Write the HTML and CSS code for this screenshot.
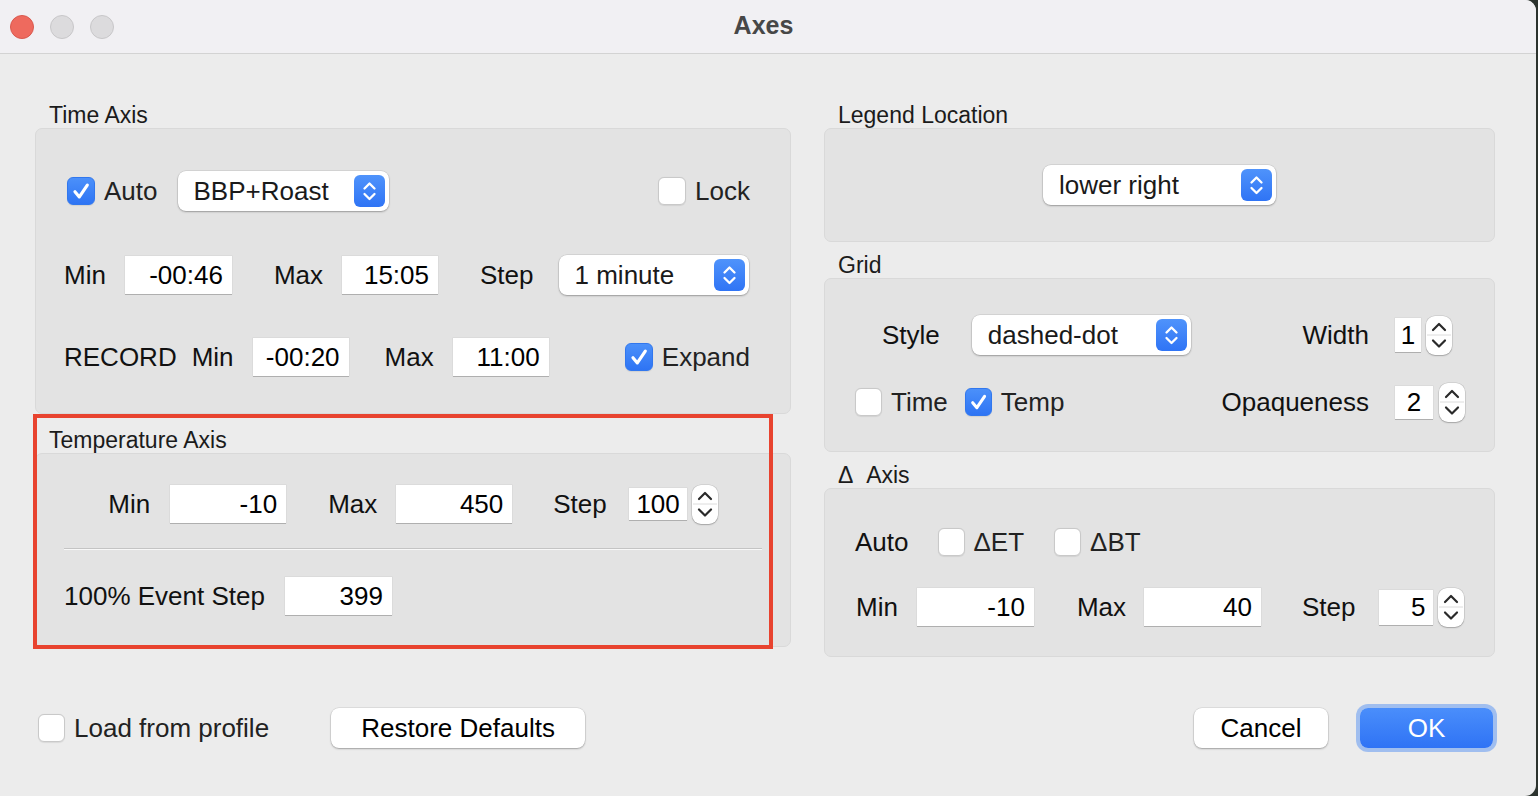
FILE: index.html
```html
<!DOCTYPE html>
<html lang="en">
<head>
<meta charset="utf-8">
<title>Axes</title>
<link rel="stylesheet" href="styles.css">
</head>
<body>
<svg class="defs" width="0" height="0" aria-hidden="true">
  <symbol id="i-check" viewBox="0 0 28 28">
    <path d="M7.5 14.8 L12.2 20.4 L20.8 7.6" fill="none" stroke="#fff" stroke-width="3.4" stroke-linecap="round" stroke-linejoin="round"/>
  </symbol>
  <symbol id="i-updown" viewBox="0 0 31 32">
    <path d="M10.5 13.5 L15.5 8.5 L20.5 13.5" fill="none" stroke="#fff" stroke-width="2.3" stroke-linecap="round" stroke-linejoin="round"/>
    <path d="M10.5 19 L15.5 24 L20.5 19" fill="none" stroke="#fff" stroke-width="2.3" stroke-linecap="round" stroke-linejoin="round"/>
  </symbol>
  <symbol id="i-step" viewBox="0 0 26 39">
    <line x1="1" y1="19" x2="25" y2="19" stroke="#dcdcdc" stroke-width="1"/>
    <path d="M7 14 L13 8 L19 14" fill="none" stroke="#2a2a2a" stroke-width="2.2" stroke-linecap="round" stroke-linejoin="round"/>
    <path d="M7 24.5 L13 30.5 L19 24.5" fill="none" stroke="#2a2a2a" stroke-width="2.2" stroke-linecap="round" stroke-linejoin="round"/>
  </symbol>
</svg>

<div class="window">
  <header class="titlebar">
    <div class="lights">
      <span class="light close"></span>
      <span class="light"></span>
      <span class="light"></span>
    </div>
    <div class="title">Axes</div>
    <div></div>
  </header>

  <main class="content">
    <div class="columns">
      <section class="col col-left">
        <div class="group">
          <div class="group-title">Time Axis</div>
          <div class="box time-box">
            <div class="row">
              <span class="check on ml3"><svg><use href="#i-check"/></svg></span>
              <span class="cb-label">Auto</span>
              <div class="popup pop-bbp ml20"><span class="popup-text">BBP+Roast</span><span class="popup-btn"><svg><use href="#i-updown"/></svg></span></div>
              <span class="spacer"></span>
              <span class="check"></span>
              <span class="cb-label lock">Lock</span>
            </div>
            <div class="row mt44">
              <span class="lbl">Min</span>
              <span class="field w107 ml19">-00:46</span>
              <span class="lbl ml42">Max</span>
              <span class="field w96 ml19">15:05</span>
              <span class="lbl ml42">Step</span>
              <div class="popup pop-step ml25"><span class="popup-text">1 minute</span><span class="popup-btn"><svg><use href="#i-updown"/></svg></span></div>
            </div>
            <div class="row mt42">
              <span class="lbl">RECORD</span>
              <span class="lbl ml15">Min</span>
              <span class="field w96 ml19">-00:20</span>
              <span class="lbl ml36">Max</span>
              <span class="field w96 ml19">11:00</span>
              <span class="spacer"></span>
              <span class="check on"><svg><use href="#i-check"/></svg></span>
              <span class="cb-label">Expand</span>
            </div>
          </div>
        </div>

        <div class="group mt13">
          <div class="group-title">Temperature Axis</div>
          <div class="box temp-box">
            <div class="row centered">
              <span class="lbl">Min</span>
              <span class="field w116 ml20">-10</span>
              <span class="lbl ml42">Max</span>
              <span class="field w116 ml19">450</span>
              <span class="lbl ml41">Step</span>
              <div class="spin ml22">
                <span class="field sfield w58 h32">100</span>
                <span class="stepper"><svg><use href="#i-step"/></svg></span>
              </div>
            </div>
            <div class="sep"></div>
            <div class="row mt26">
              <span class="lbl">100% Event Step</span>
              <span class="field w107 ml20">399</span>
            </div>
          </div>
        </div>
      </section>

      <section class="col col-right">
        <div class="group">
          <div class="group-title">Legend Location</div>
          <div class="box legend-box">
            <div class="popup pop-legend"><span class="popup-text">lower right</span><span class="popup-btn"><svg><use href="#i-updown"/></svg></span></div>
          </div>
        </div>

        <div class="group mt10">
          <div class="group-title">Grid</div>
          <div class="box grid-box">
            <div class="cell-left">
              <span class="lbl ml27">Style</span>
              <div class="popup pop-style ml32"><span class="popup-text">dashed-dot</span><span class="popup-btn"><svg><use href="#i-updown"/></svg></span></div>
            </div>
            <span class="lbl right">Width</span>
            <div class="spin">
              <span class="field sfield c w26 h34">1</span>
              <span class="stepper"><svg><use href="#i-step"/></svg></span>
            </div>

            <div class="cell-left">
              <span class="check sm"></span>
              <span class="cb-label">Time</span>
              <span class="check sm on ml17"><svg><use href="#i-check"/></svg></span>
              <span class="cb-label">Temp</span>
            </div>
            <span class="lbl right">Opaqueness</span>
            <div class="spin gap6">
              <span class="field sfield c w38 h33">2</span>
              <span class="stepper"><svg><use href="#i-step"/></svg></span>
            </div>
          </div>
        </div>

        <div class="group mt10">
          <div class="group-title">&Delta;&nbsp; Axis</div>
          <div class="box delta-box">
            <div class="row">
              <span class="lbl">Auto</span>
              <span class="check sm ml29"></span>
              <span class="cb-label">&Delta;ET</span>
              <span class="check sm ml30"></span>
              <span class="cb-label">&Delta;BT</span>
            </div>
            <div class="row mt25">
              <span class="lbl ml1">Min</span>
              <span class="field w117 ml19">-10</span>
              <span class="lbl ml43">Max</span>
              <span class="field w117 ml18">40</span>
              <span class="lbl ml41">Step</span>
              <div class="spin ml23">
                <span class="field sfield w54 h35">5</span>
                <span class="stepper"><svg><use href="#i-step"/></svg></span>
              </div>
            </div>
          </div>
        </div>
      </section>
    </div>

    <footer class="bottom">
      <span class="check sm"></span>
      <span class="cb-label">Load from profile</span>
      <button class="btn btn-restore ml62">Restore Defaults</button>
      <span class="spacer"></span>
      <button class="btn btn-cancel">Cancel</button>
      <button class="btn btn-ok ml32">OK</button>
    </footer>
  </main>

  <div class="annot"></div>
</div>
</body>
</html>
```

FILE: styles.css
```css
* { box-sizing: border-box; }
html, body { margin: 0; padding: 0; }
body {
  width: 1538px;
  height: 796px;
  overflow: hidden;
  background: #2c332e;
  font-family: "Liberation Sans", Arial, sans-serif;
  font-size: 26px;
  color: #1d1d1d;
}
.defs { position: absolute; width: 0; height: 0; overflow: hidden; }

.window {
  width: 1536px;
  height: 796px;
  background: #ececec;
  border-radius: 0 11px 11px 0;
  overflow: hidden;
  display: flex;
  flex-direction: column;
  position: relative;
}

/* title bar */
.titlebar {
  height: 54px;
  flex: none;
  background: #f1f0f3;
  border-bottom: 1px solid #d3d3d3;
  display: grid;
  grid-template-columns: 1fr auto 1fr;
  align-items: center;
}
.lights { display: flex; gap: 16px; padding-left: 10px; }
.light {
  width: 24px; height: 24px; border-radius: 50%;
  background: #dcdbdd; border: 1px solid #c8c7c9;
}
.light.close { background: #ee6a5e; border-color: #d9594e; }
.title { font-size: 25px; font-weight: 700; color: #474747; margin: -3px 9px 0 0; }

/* content */
.content { flex: 1; display: flex; flex-direction: column; }
.columns { display: flex; gap: 33px; padding: 48px 41px 0 35px; }
.col-left { width: 756px; }
.col-right { width: 671px; }

.group-title {
  height: 26px; line-height: 26px; font-size: 23px;
  padding-left: 14px; color: #1b1b1b; white-space: nowrap;
}
.box { background: #e3e3e3; border: 1px solid #d9d9d9; border-radius: 7px; }

.time-box { height: 286px; padding: 42px 40px 0 28px; }
.temp-box { height: 194px; padding: 30px 28px 0 28px; }
.legend-box { height: 114px; display: flex; align-items: center; justify-content: center; }
.grid-box {
  height: 174px;
  padding: 36px 29px 0 30px;
  display: grid;
  grid-template-columns: 1fr auto auto;
  grid-auto-rows: 40px;
  column-gap: 26px;
  row-gap: 27px;
  align-items: center;
}
.delta-box { height: 169px; padding: 33px 0 0 30px; }

.row { display: flex; align-items: center; height: 40px; white-space: nowrap; }
.row.centered { justify-content: center; }
.cell-left { display: flex; align-items: center; height: 40px; white-space: nowrap; }
.spacer { flex: 1; }

.lbl { color: #111; white-space: nowrap; }
.lbl.right { text-align: right; }
.cb-label { margin-left: 9px; color: #222; white-space: nowrap; }

.sep {
  margin-top: 24px; height: 2px;
  border-top: 1px solid #c4c4c4; border-bottom: 1px solid #f8f8f8;
}

/* text fields */
.field {
  height: 38px;
  background: #fff;
  display: flex; align-items: center; justify-content: flex-end;
  padding-right: 9px;
  color: #000;
  box-shadow: 0 1px 0 rgba(0,0,0,0.2), 0 0 0 0.5px rgba(0,0,0,0.07);
  flex: none;
}
.sfield { padding: 0 7px; }
.sfield.c { justify-content: center; padding: 0; }
.w26 { width: 26px; } .w38 { width: 38px; } .w54 { width: 54px; } .w58 { width: 58px; }
.w96 { width: 96px; } .w107 { width: 107px; } .w116 { width: 116px; } .w117 { width: 117px; }
.h32 { height: 32px; } .h33 { height: 33px; } .h34 { height: 34px; } .h35 { height: 35px; }

/* spin box */
.spin { display: flex; align-items: center; gap: 5px; }
.spin.gap6 { gap: 6px; }
.stepper {
  width: 26px; height: 39px; flex: none;
  background: #fff; border-radius: 9px;
  box-shadow: 0 0 0 0.5px rgba(0,0,0,0.14), 0 1px 1.5px rgba(0,0,0,0.22);
}
.stepper svg { width: 26px; height: 39px; display: block; }

/* popup buttons */
.popup {
  display: flex; align-items: center; flex: none;
  height: 40px;
  background: #fff;
  border-radius: 8px;
  padding: 0 4px 0 16px;
  box-shadow: 0 0 0 0.5px rgba(0,0,0,0.12), 0 1px 2px rgba(0,0,0,0.28);
  color: #1a1a1a;
}
.popup-text { flex: 1; white-space: nowrap; }
.popup-btn {
  width: 31px; height: 32px; border-radius: 6px;
  background: linear-gradient(#4f93fb, #2f74f5);
  display: flex; align-items: center; justify-content: center;
}
.popup-btn svg { width: 31px; height: 32px; display: block; }
.pop-bbp { width: 211px; }
.pop-step { width: 190px; }
.pop-legend { width: 233px; }
.pop-style { width: 219px; }

/* checkboxes */
.check {
  width: 28px; height: 28px; flex: none;
  border-radius: 6px;
  background: #fff;
  border: 1px solid #c9c9c9;
  box-shadow: 0 0.5px 1px rgba(0,0,0,0.08);
  display: flex; align-items: center; justify-content: center;
}
.check.sm { width: 27px; }
.check.on { background: linear-gradient(#4b90fa, #2e74f4); border-color: #3177ee; }
.check svg { width: 28px; height: 28px; display: block; }

/* bottom buttons */
.bottom {
  display: flex; align-items: center;
  height: 40px;
  margin-top: 51px;
  padding: 0 43px 0 38px;
}
.btn {
  height: 40px;
  font-family: inherit; font-size: 26px;
  background: #fff; color: #000;
  border: none; border-radius: 8px;
  box-shadow: 0 0 0 0.5px rgba(0,0,0,0.12), 0 1px 2px rgba(0,0,0,0.28);
  padding: 0;
}
.btn-restore { width: 254px; }
.btn-cancel { width: 134px; }
.btn-ok {
  width: 133px;
  color: #fff;
  background: linear-gradient(#4a8efb, #2f73f5);
  box-shadow: 0 0 0 4px rgba(110, 160, 242, 0.6);
}

/* annotation overlay */
.annot {
  position: absolute;
  left: 33px; top: 414px;
  width: 740px; height: 235px;
  border: 4px solid #e8432f;
  pointer-events: none;
}

/* spacing utilities */
.ml1 { margin-left: 1px; } .ml3 { margin-left: 3px; } .ml15 { margin-left: 15px; }
.ml17 { margin-left: 17px; } .ml18 { margin-left: 18px; } .ml19 { margin-left: 19px; }
.ml20 { margin-left: 20px; } .ml22 { margin-left: 22px; } .ml23 { margin-left: 23px; }
.ml25 { margin-left: 25px; } .ml27 { margin-left: 27px; } .ml29 { margin-left: 29px; }
.ml30 { margin-left: 30px; } .ml32 { margin-left: 32px; } .ml36 { margin-left: 36px; }
.ml41 { margin-left: 41px; } .ml42 { margin-left: 42px; } .ml43 { margin-left: 43px; }
.ml62 { margin-left: 62px; }
.mt10 { margin-top: 10px; } .mt13 { margin-top: 13px; } .mt25 { margin-top: 25px; }
.mt26 { margin-top: 26px; } .mt42 { margin-top: 42px; } .mt44 { margin-top: 44px; }
```
